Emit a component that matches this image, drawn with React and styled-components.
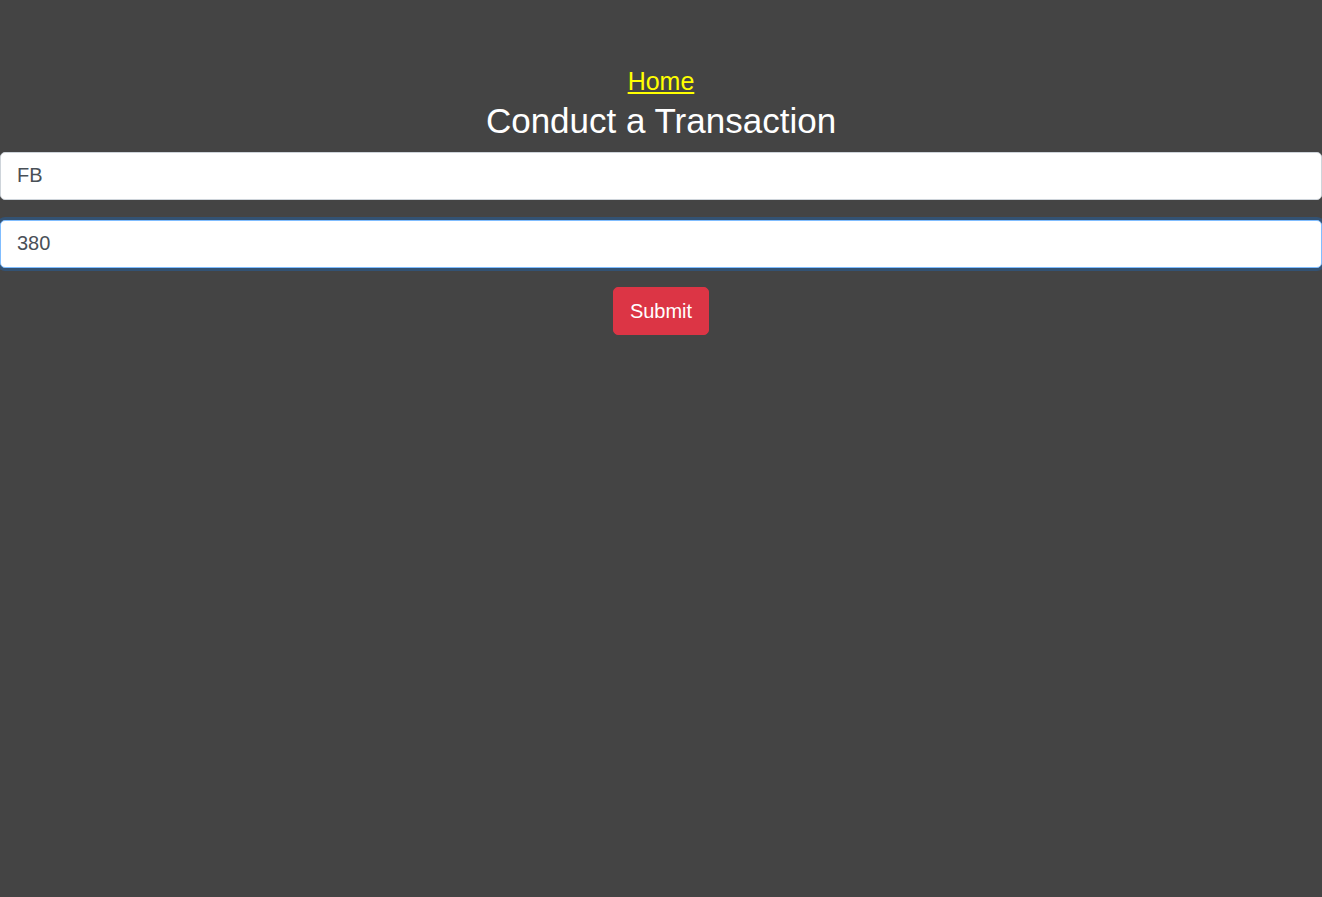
import React, { useEffect, useRef } from 'react';
import styled, { createGlobalStyle } from 'styled-components';

const GlobalStyle = createGlobalStyle`
  html, body {
    margin: 0;
    padding: 0;
    background: #444444;
    font-family: "Liberation Sans", Arial, sans-serif;
  }
`;

const Page = styled.div`
  min-height: 897px;
  background: #444444;
  padding-top: 63px;
  box-sizing: border-box;
  text-align: center;
`;

const HomeLink = styled.a`
  display: inline-block;
  font-size: 25px;
  line-height: 36.5px;
  color: #ffff00;
  text-decoration: underline;
`;

const Title = styled.h2`
  margin: 0 0 10px;
  font-size: 35px;
  font-weight: 400;
  line-height: 1.2;
  color: #ffffff;
`;

const Form = styled.form`
  display: flex;
  flex-direction: column;
  align-items: center;
  gap: 20px;
`;

const Input = styled.input`
  display: block;
  width: 100%;
  height: 48px;
  box-sizing: border-box;
  padding: 8px 16px;
  font-family: inherit;
  font-size: 20px;
  line-height: 1.5;
  color: #495057;
  caret-color: #222222;
  background: #ffffff;
  border: 1px solid ${(p) => (p.$focused ? '#80bdff' : '#ced4da')};
  border-radius: 5px;
  outline: none;
  box-shadow: ${(p) => (p.$focused ? '0 0 0 3px rgba(0, 123, 255, 0.25)' : 'none')};
`;

const SubmitButton = styled.button`
  margin-top: -1px;
  height: 48px;
  padding: 8px 16px;
  font-family: inherit;
  font-size: 20px;
  line-height: 1.5;
  color: #ffffff;
  background: #dc3545;
  border: 1px solid #dc3545;
  border-radius: 5px;
  cursor: pointer;
`;

const App = () => {
  const amountRef = useRef(null);

  useEffect(() => {
    const el = amountRef.current;
    if (el) {
      el.focus();
      el.setSelectionRange(el.value.length, el.value.length);
    }
  }, []);

  return (
    <Page>
      <GlobalStyle />
      <HomeLink href="#">Home</HomeLink>
      <Title>Conduct a Transaction</Title>
      <Form onSubmit={(e) => e.preventDefault()}>
        <Input type="text" defaultValue="FB" />
        <Input ref={amountRef} type="text" defaultValue="380" $focused />
        <SubmitButton type="submit">Submit</SubmitButton>
      </Form>
    </Page>
  );
};

export default App;
